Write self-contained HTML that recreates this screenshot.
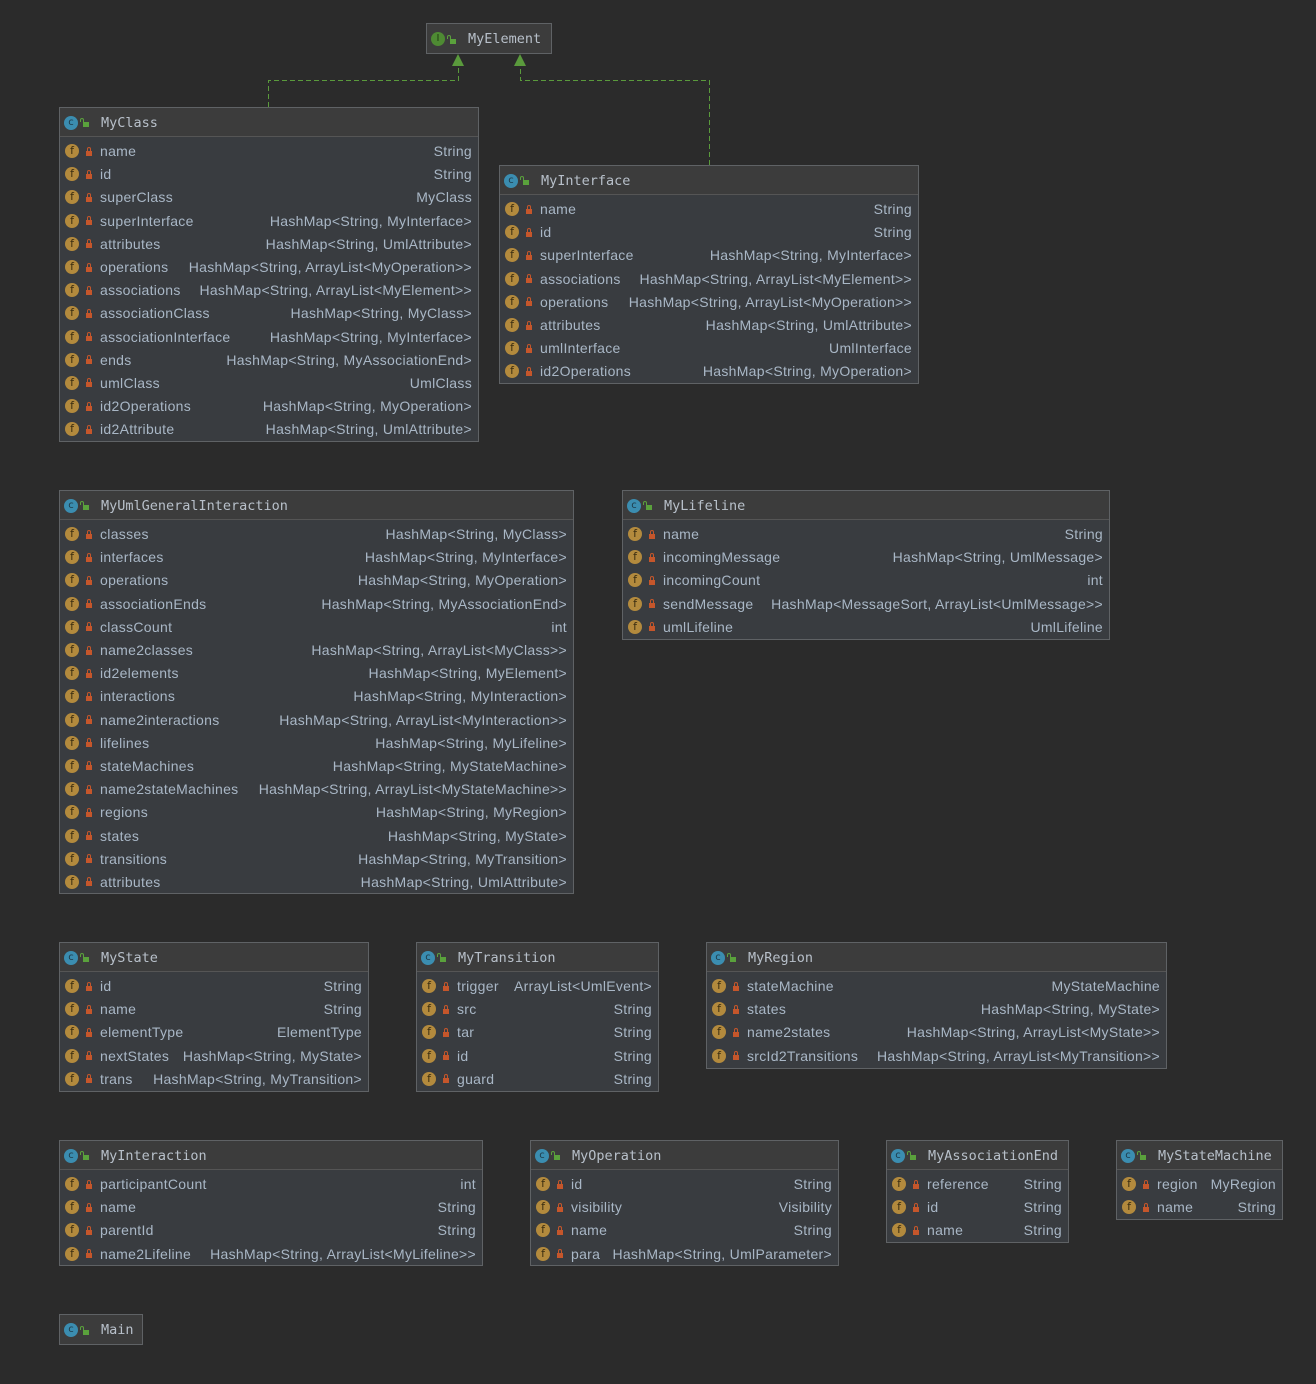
<!DOCTYPE html>
<html><head><meta charset="utf-8"><style>
html,body{margin:0;padding:0;background:#2b2b2b;width:1316px;height:1384px;overflow:hidden;position:relative}
.b{position:absolute;border:1px solid #5f6265;background:#393c40;box-sizing:border-box;color:#a9b7c6;font-family:"Liberation Sans",sans-serif;font-size:14px;letter-spacing:0.3px}
.h{height:29px;background:#3c3c3c;border-bottom:1px solid #555;display:flex;align-items:center;font-family:"DejaVu Sans Mono","Liberation Mono",monospace;font-size:13.5px;letter-spacing:0;color:#b8c0ca;padding-left:4px;box-sizing:border-box;padding-top:1px}
.bd{padding:2px 0}
.r{height:23.2px;display:flex;align-items:center;padding:1px 6px 0 5px;box-sizing:border-box;white-space:nowrap}
.r .n{flex:1;padding-right:8px}
.fi{width:14px;height:14px;border-radius:50%;background:#b38a3d;color:#3a2c10;font-size:11px;letter-spacing:0;line-height:14px;text-align:center;margin-right:7px;flex:none;font-family:"DejaVu Sans",sans-serif}
.lk{width:6px;height:5px;background:#c5562b;position:relative;margin-right:8px;margin-top:4px;flex:none}
.lk:before{content:"";position:absolute;left:1px;top:-4px;width:2px;height:3px;border:1px solid #c5562b;border-bottom:none;border-radius:2px 2px 0 0}
.ci{width:14px;height:14px;border-radius:50%;background:#3b8db0;color:#1e3a48;font-size:10px;line-height:14px;text-align:center;margin-right:5px;flex:none;font-family:"DejaVu Sans",sans-serif}
.ii{background:#4e8a33;color:#1e3a10}
.gl{width:6px;height:5px;background:#5aa13c;position:relative;margin-right:12px;margin-top:4px;flex:none}
.gl:before{content:"";position:absolute;left:-3px;top:-4px;width:2px;height:3px;border:1px solid #5aa13c;border-bottom:none;border-radius:2px 2px 0 0}
</style></head><body>
<svg width="1316" height="1384" style="position:absolute;left:0;top:0">
<g stroke="#5a9a3c" stroke-width="1" fill="none" stroke-dasharray="5,3">
<path d="M268.5 107V80.5H458.5V64"/>
<path d="M709.5 165V80.5H520.5V64"/>
</g>
<polygon points="458,54 452,66 464,66" fill="#5a9a3c"/>
<polygon points="520,54 514,66 526,66" fill="#5a9a3c"/>
</svg>

<div class="b" style="left:426px;top:23px;width:126px;height:31px"><div class="h" style="border:none;height:29px"><span class="ci ii">I</span><span class="gl"></span>MyElement</div></div>

<div class="b" style="left:59px;top:107px;width:420px;height:335px"><div class="h"><span class="ci">c</span><span class="gl"></span>MyClass</div><div class="bd">
<div class="r"><span class="fi">f</span><span class="lk"></span><span class="n">name</span>String</div>
<div class="r"><span class="fi">f</span><span class="lk"></span><span class="n">id</span>String</div>
<div class="r"><span class="fi">f</span><span class="lk"></span><span class="n">superClass</span>MyClass</div>
<div class="r"><span class="fi">f</span><span class="lk"></span><span class="n">superInterface</span>HashMap&lt;String, MyInterface&gt;</div>
<div class="r"><span class="fi">f</span><span class="lk"></span><span class="n">attributes</span>HashMap&lt;String, UmlAttribute&gt;</div>
<div class="r"><span class="fi">f</span><span class="lk"></span><span class="n">operations</span>HashMap&lt;String, ArrayList&lt;MyOperation&gt;&gt;</div>
<div class="r"><span class="fi">f</span><span class="lk"></span><span class="n">associations</span>HashMap&lt;String, ArrayList&lt;MyElement&gt;&gt;</div>
<div class="r"><span class="fi">f</span><span class="lk"></span><span class="n">associationClass</span>HashMap&lt;String, MyClass&gt;</div>
<div class="r"><span class="fi">f</span><span class="lk"></span><span class="n">associationInterface</span>HashMap&lt;String, MyInterface&gt;</div>
<div class="r"><span class="fi">f</span><span class="lk"></span><span class="n">ends</span>HashMap&lt;String, MyAssociationEnd&gt;</div>
<div class="r"><span class="fi">f</span><span class="lk"></span><span class="n">umlClass</span>UmlClass</div>
<div class="r"><span class="fi">f</span><span class="lk"></span><span class="n">id2Operations</span>HashMap&lt;String, MyOperation&gt;</div>
<div class="r"><span class="fi">f</span><span class="lk"></span><span class="n">id2Attribute</span>HashMap&lt;String, UmlAttribute&gt;</div>
</div></div>

<div class="b" style="left:499px;top:165px;width:420px;height:219px"><div class="h"><span class="ci">c</span><span class="gl"></span>MyInterface</div><div class="bd">
<div class="r"><span class="fi">f</span><span class="lk"></span><span class="n">name</span>String</div>
<div class="r"><span class="fi">f</span><span class="lk"></span><span class="n">id</span>String</div>
<div class="r"><span class="fi">f</span><span class="lk"></span><span class="n">superInterface</span>HashMap&lt;String, MyInterface&gt;</div>
<div class="r"><span class="fi">f</span><span class="lk"></span><span class="n">associations</span>HashMap&lt;String, ArrayList&lt;MyElement&gt;&gt;</div>
<div class="r"><span class="fi">f</span><span class="lk"></span><span class="n">operations</span>HashMap&lt;String, ArrayList&lt;MyOperation&gt;&gt;</div>
<div class="r"><span class="fi">f</span><span class="lk"></span><span class="n">attributes</span>HashMap&lt;String, UmlAttribute&gt;</div>
<div class="r"><span class="fi">f</span><span class="lk"></span><span class="n">umlInterface</span>UmlInterface</div>
<div class="r"><span class="fi">f</span><span class="lk"></span><span class="n">id2Operations</span>HashMap&lt;String, MyOperation&gt;</div>
</div></div>

<div class="b" style="left:59px;top:490px;width:515px;height:404px"><div class="h"><span class="ci">c</span><span class="gl"></span>MyUmlGeneralInteraction</div><div class="bd">
<div class="r"><span class="fi">f</span><span class="lk"></span><span class="n">classes</span>HashMap&lt;String, MyClass&gt;</div>
<div class="r"><span class="fi">f</span><span class="lk"></span><span class="n">interfaces</span>HashMap&lt;String, MyInterface&gt;</div>
<div class="r"><span class="fi">f</span><span class="lk"></span><span class="n">operations</span>HashMap&lt;String, MyOperation&gt;</div>
<div class="r"><span class="fi">f</span><span class="lk"></span><span class="n">associationEnds</span>HashMap&lt;String, MyAssociationEnd&gt;</div>
<div class="r"><span class="fi">f</span><span class="lk"></span><span class="n">classCount</span>int</div>
<div class="r"><span class="fi">f</span><span class="lk"></span><span class="n">name2classes</span>HashMap&lt;String, ArrayList&lt;MyClass&gt;&gt;</div>
<div class="r"><span class="fi">f</span><span class="lk"></span><span class="n">id2elements</span>HashMap&lt;String, MyElement&gt;</div>
<div class="r"><span class="fi">f</span><span class="lk"></span><span class="n">interactions</span>HashMap&lt;String, MyInteraction&gt;</div>
<div class="r"><span class="fi">f</span><span class="lk"></span><span class="n">name2interactions</span>HashMap&lt;String, ArrayList&lt;MyInteraction&gt;&gt;</div>
<div class="r"><span class="fi">f</span><span class="lk"></span><span class="n">lifelines</span>HashMap&lt;String, MyLifeline&gt;</div>
<div class="r"><span class="fi">f</span><span class="lk"></span><span class="n">stateMachines</span>HashMap&lt;String, MyStateMachine&gt;</div>
<div class="r"><span class="fi">f</span><span class="lk"></span><span class="n">name2stateMachines</span>HashMap&lt;String, ArrayList&lt;MyStateMachine&gt;&gt;</div>
<div class="r"><span class="fi">f</span><span class="lk"></span><span class="n">regions</span>HashMap&lt;String, MyRegion&gt;</div>
<div class="r"><span class="fi">f</span><span class="lk"></span><span class="n">states</span>HashMap&lt;String, MyState&gt;</div>
<div class="r"><span class="fi">f</span><span class="lk"></span><span class="n">transitions</span>HashMap&lt;String, MyTransition&gt;</div>
<div class="r"><span class="fi">f</span><span class="lk"></span><span class="n">attributes</span>HashMap&lt;String, UmlAttribute&gt;</div>
</div></div>

<div class="b" style="left:622px;top:490px;width:488px;height:150px"><div class="h"><span class="ci">c</span><span class="gl"></span>MyLifeline</div><div class="bd">
<div class="r"><span class="fi">f</span><span class="lk"></span><span class="n">name</span>String</div>
<div class="r"><span class="fi">f</span><span class="lk"></span><span class="n">incomingMessage</span>HashMap&lt;String, UmlMessage&gt;</div>
<div class="r"><span class="fi">f</span><span class="lk"></span><span class="n">incomingCount</span>int</div>
<div class="r"><span class="fi">f</span><span class="lk"></span><span class="n">sendMessage</span>HashMap&lt;MessageSort, ArrayList&lt;UmlMessage&gt;&gt;</div>
<div class="r"><span class="fi">f</span><span class="lk"></span><span class="n">umlLifeline</span>UmlLifeline</div>
</div></div>

<div class="b" style="left:59px;top:942px;width:310px;height:150px"><div class="h"><span class="ci">c</span><span class="gl"></span>MyState</div><div class="bd">
<div class="r"><span class="fi">f</span><span class="lk"></span><span class="n">id</span>String</div>
<div class="r"><span class="fi">f</span><span class="lk"></span><span class="n">name</span>String</div>
<div class="r"><span class="fi">f</span><span class="lk"></span><span class="n">elementType</span>ElementType</div>
<div class="r"><span class="fi">f</span><span class="lk"></span><span class="n">nextStates</span>HashMap&lt;String, MyState&gt;</div>
<div class="r"><span class="fi">f</span><span class="lk"></span><span class="n">trans</span>HashMap&lt;String, MyTransition&gt;</div>
</div></div>

<div class="b" style="left:416px;top:942px;width:243px;height:150px"><div class="h"><span class="ci">c</span><span class="gl"></span>MyTransition</div><div class="bd">
<div class="r"><span class="fi">f</span><span class="lk"></span><span class="n">trigger</span>ArrayList&lt;UmlEvent&gt;</div>
<div class="r"><span class="fi">f</span><span class="lk"></span><span class="n">src</span>String</div>
<div class="r"><span class="fi">f</span><span class="lk"></span><span class="n">tar</span>String</div>
<div class="r"><span class="fi">f</span><span class="lk"></span><span class="n">id</span>String</div>
<div class="r"><span class="fi">f</span><span class="lk"></span><span class="n">guard</span>String</div>
</div></div>

<div class="b" style="left:706px;top:942px;width:461px;height:127px"><div class="h"><span class="ci">c</span><span class="gl"></span>MyRegion</div><div class="bd">
<div class="r"><span class="fi">f</span><span class="lk"></span><span class="n">stateMachine</span>MyStateMachine</div>
<div class="r"><span class="fi">f</span><span class="lk"></span><span class="n">states</span>HashMap&lt;String, MyState&gt;</div>
<div class="r"><span class="fi">f</span><span class="lk"></span><span class="n">name2states</span>HashMap&lt;String, ArrayList&lt;MyState&gt;&gt;</div>
<div class="r"><span class="fi">f</span><span class="lk"></span><span class="n">srcId2Transitions</span>HashMap&lt;String, ArrayList&lt;MyTransition&gt;&gt;</div>
</div></div>

<div class="b" style="left:59px;top:1140px;width:424px;height:126px"><div class="h"><span class="ci">c</span><span class="gl"></span>MyInteraction</div><div class="bd">
<div class="r"><span class="fi">f</span><span class="lk"></span><span class="n">participantCount</span>int</div>
<div class="r"><span class="fi">f</span><span class="lk"></span><span class="n">name</span>String</div>
<div class="r"><span class="fi">f</span><span class="lk"></span><span class="n">parentId</span>String</div>
<div class="r"><span class="fi">f</span><span class="lk"></span><span class="n">name2Lifeline</span>HashMap&lt;String, ArrayList&lt;MyLifeline&gt;&gt;</div>
</div></div>

<div class="b" style="left:530px;top:1140px;width:309px;height:126px"><div class="h"><span class="ci">c</span><span class="gl"></span>MyOperation</div><div class="bd">
<div class="r"><span class="fi">f</span><span class="lk"></span><span class="n">id</span>String</div>
<div class="r"><span class="fi">f</span><span class="lk"></span><span class="n">visibility</span>Visibility</div>
<div class="r"><span class="fi">f</span><span class="lk"></span><span class="n">name</span>String</div>
<div class="r"><span class="fi">f</span><span class="lk"></span><span class="n">para</span>HashMap&lt;String, UmlParameter&gt;</div>
</div></div>

<div class="b" style="left:886px;top:1140px;width:183px;height:103px"><div class="h"><span class="ci">c</span><span class="gl"></span>MyAssociationEnd</div><div class="bd">
<div class="r"><span class="fi">f</span><span class="lk"></span><span class="n">reference</span>String</div>
<div class="r"><span class="fi">f</span><span class="lk"></span><span class="n">id</span>String</div>
<div class="r"><span class="fi">f</span><span class="lk"></span><span class="n">name</span>String</div>
</div></div>

<div class="b" style="left:1116px;top:1140px;width:167px;height:80px"><div class="h"><span class="ci">c</span><span class="gl"></span>MyStateMachine</div><div class="bd">
<div class="r"><span class="fi">f</span><span class="lk"></span><span class="n">region</span>MyRegion</div>
<div class="r"><span class="fi">f</span><span class="lk"></span><span class="n">name</span>String</div>
</div></div>

<div class="b" style="left:59px;top:1314px;width:84px;height:31px"><div class="h" style="border:none"><span class="ci">c</span><span class="gl"></span>Main</div></div>
</body></html>
